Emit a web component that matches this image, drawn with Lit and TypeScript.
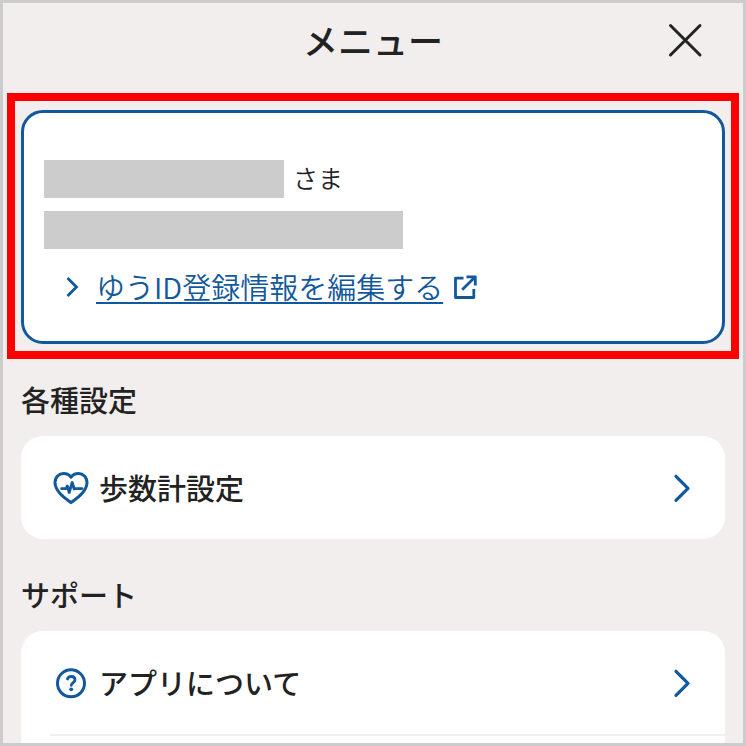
import { LitElement, html, css, svg } from "lit";
import { customElement, property } from "lit/decorators.js";

const heartIcon = svg`
  <svg width="36" height="34" viewBox="0 0 36 34" fill="none" stroke="currentColor" stroke-linecap="round" stroke-linejoin="round" aria-hidden="true">
    <path stroke-width="3" d="M18 31.6C12 27 2 20.5 2 11.500C2 6 6 2.500 10.500 2.500C13.700 2.500 16.300 3.700 18 6.300C19.700 3.700 22.300 2.500 25.500 2.500C30 2.500 34 6 34 11.500C34 20.500 24 27 18 31.600Z"/>
    <path stroke-width="2.800" d="M8.500 17.600H13L14.300 15L16.200 21.500L19.200 11.500L21.200 18L22 17.600H29"/>
  </svg>`;

const questionIcon = svg`
  <svg width="36" height="34" viewBox="0 0 36 34" fill="none" stroke="currentColor" stroke-linecap="round" stroke-linejoin="round" aria-hidden="true">
    <circle cx="18" cy="17.300" r="13.500" stroke-width="3"/>
    <path stroke-width="2.800" d="M14.500 13C15 11.300 16.300 10.500 18.200 10.500C20.300 10.500 22 11.700 22 13.700C22 16.500 18.300 16.600 18.300 19.300"/>
    <circle cx="18.200" cy="23.300" r="1.900" fill="currentColor" stroke="none"/>
  </svg>`;

@customElement("menu-row")
export class MenuRow extends LitElement {
  @property() label = "";
  @property() icon = "";

  static styles = css`
    :host { display: block; }
    .row {
      display: flex;
      align-items: center;
      box-sizing: border-box;
      width: 100%;
      min-height: 103px;
      padding: 0 32px;
      border: 0;
      background: none;
      color: #12589c;
      font: inherit;
      text-align: left;
      cursor: pointer;
    }
    .icon { display: flex; margin-right: 10px; }
    .label { flex: 1; padding-bottom: 2px; color: #222; font-size: 29px; line-height: 42px; font-weight: 500; }
  `;

  render() {
    return html`
      <button class="row" type="button">
        <span class="icon">${this.icon === "heart" ? heartIcon : questionIcon}</span>
        <span class="label">${this.label}</span>
        <svg width="20" height="32" viewBox="0 0 20 32" fill="none" stroke="currentColor" stroke-width="3.200" stroke-linecap="round" stroke-linejoin="round" aria-hidden="true">
          <path d="M3 4.300L15 16.300L3 28.300"/>
        </svg>
      </button>
    `;
  }
}

@customElement("app-root")
export class AppRoot extends LitElement {
  static styles = css`
    :host {
      display: block;
      font-family: "Noto Sans CJK JP", sans-serif;
      color: #222;
    }
    .frame {
      display: flex;
      flex-direction: column;
      box-sizing: border-box;
      min-height: 100vh;
      border: 3px solid #ccc;
      background: #f2eeed;
    }
    .header {
      display: grid;
      grid-template-columns: 1fr auto 1fr;
      align-items: center;
      height: 74px;
      padding: 0 38px;
    }
    .title { grid-column: 2; margin: 0; font-size: 35px; line-height: 48px; font-weight: 500; }
    .close {
      justify-self: end;
      display: flex;
      padding: 0;
      border: 0;
      background: none;
      color: #222;
      cursor: pointer;
    }
    .highlight {
      margin: 16px 4px 0;
      padding: 9px 6px 7px;
      border: 8px solid #f00;
    }
    .account {
      display: flex;
      flex-direction: column;
      box-sizing: border-box;
      min-height: 234px;
      padding: 47px 20px 0;
      border: 3px solid #12589c;
      border-radius: 22px;
      background: #fff;
    }
    .name { display: flex; gap: 9px; font-size: 25px; line-height: 34px; font-weight: 350; }
    .mask { height: 38px; background: #ccc; }
    .mask-name { width: 240px; }
    .mask-mail { width: 359px; max-width: 100%; margin-top: 13px; }
    .edit {
      display: flex;
      align-items: center;
      align-self: flex-start;
      margin: 16px 0 0 18px;
      color: #12589c;
      font-size: 29px;
      line-height: 42px;
      font-weight: 350;
      text-decoration: none;
    }
    .edit-text {
      padding-bottom: 2px;
      margin: 0 9px 0 14px;
      text-decoration: underline;
      text-decoration-thickness: 2px;
      text-underline-offset: 3px;
      text-decoration-skip-ink: none;
    }
    .section { padding: 0 18px; margin-top: 33px; }
    .highlight + .section { margin-top: 18px; }
    .section:last-child { display: flex; flex: 1; flex-direction: column; }
    .section:last-child .card { flex: 1; border-radius: 22px 22px 0 0; }
    .heading { margin: 0 0 15px; font-size: 29px; line-height: 44px; font-weight: 500; }
    .card { border-radius: 22px; background: #fff; }
    .divider { height: 2px; margin: 0 0 0 29px; border: 0; background: #f0f0f0; }
  `;

  render() {
    return html`
      <main class="frame">
        <header class="header">
          <h1 class="title">メニュー</h1>
          <button class="close" type="button" aria-label="閉じる">
            <svg width="40" height="40" viewBox="0 0 40 40" fill="none" stroke="currentColor" stroke-width="3" stroke-linecap="round" aria-hidden="true">
              <path d="M5.500 5.500L35 35M35 5.500L5.500 35"/>
            </svg>
          </button>
        </header>

        <div class="highlight">
          <section class="account">
            <div class="name"><span class="mask mask-name"></span><span>さま</span></div>
            <div class="mask mask-mail"></div>
            <a class="edit" href="#">
              <svg width="20" height="24" viewBox="0 0 20 24" fill="none" stroke="currentColor" stroke-width="2.800" aria-hidden="true">
                <path d="M5.500 3L14.500 12L5.500 21"/>
              </svg>
              <span class="edit-text">ゆうID登録情報を編集する</span>
              <svg width="26" height="26" viewBox="0 0 26 26" fill="none" stroke="currentColor" stroke-width="2.800" stroke-linejoin="round" aria-hidden="true">
                <path d="M11.500 4.200H3.500V23.500H21.800V15M14.500 2.800H23.300V11.500M23.300 2.800L10.200 15.700"/>
              </svg>
            </a>
          </section>
        </div>

        <section class="section">
          <h2 class="heading">各種設定</h2>
          <div class="card">
            <menu-row icon="heart" label="歩数計設定"></menu-row>
          </div>
        </section>

        <section class="section">
          <h2 class="heading">サポート</h2>
          <div class="card">
            <menu-row icon="question" label="アプリについて"></menu-row>
            <hr class="divider" />
          </div>
        </section>
      </main>
    `;
  }
}
